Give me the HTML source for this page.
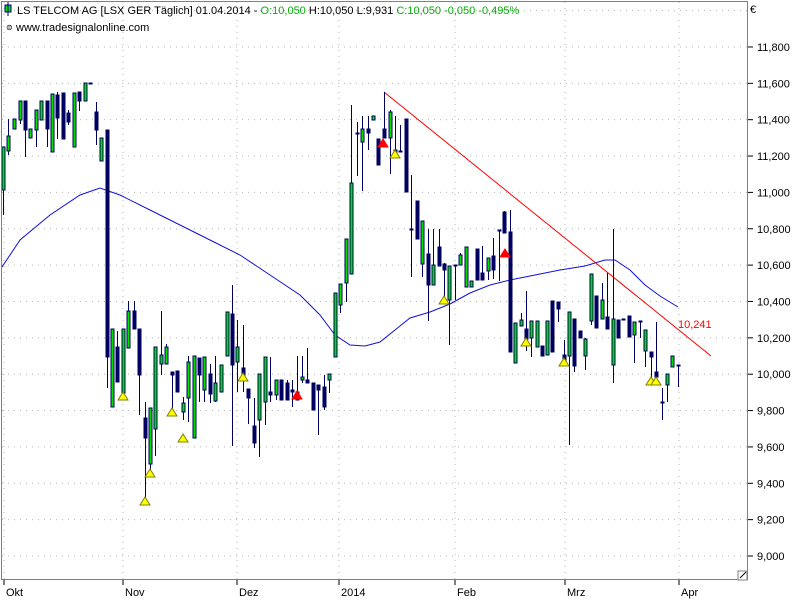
<!DOCTYPE html>
<html><head><meta charset="utf-8"><style>
body{margin:0;background:#fff;width:800px;height:600px;overflow:hidden;font-family:"Liberation Sans",sans-serif}
svg{position:absolute;left:0;top:0}
</style></head><body>
<svg id="s" width="800" height="600" xmlns="http://www.w3.org/2000/svg" font-family="Liberation Sans, sans-serif">
<rect x="0" y="0" width="800" height="600" fill="#fff"/>
<g id="grid" stroke="#b4b4b4" stroke-dasharray="1,5"></g>
<polyline fill="none" stroke="#1010e0" stroke-width="1" points="2,267 20,240 50,215 80,195 100,188 120,195 150,210 180,225 210,240 240,255 270,275 300,295 320,315 335,335 350,345 365,346 380,342 395,330 410,318 430,312 450,304 470,293 490,285 510,280 530,276 560,270 585,266 605,260 615,260 630,270 645,285 660,296 678,307"/>
<line x1="384" y1="92" x2="711" y2="356" stroke="#ff0000" stroke-width="1"/>
<g id="bars"></g>
<g id="tris"></g>
<text x="678" y="328" font-size="11" fill="#ff0000">10,241</text>
<rect x="1.5" y="1.5" width="746" height="578" fill="none" stroke="#808080"/>
<rect x="738" y="571" width="9" height="9" fill="#fff" stroke="#808080"/>
<line x1="740" y1="578" x2="746" y2="572" stroke="#000"/>
<g id="axis" font-size="11" fill="#000"></g>
<rect x="5" y="5" width="6" height="7" fill="#00e000" stroke="#000080"/>
<line x1="8" y1="2" x2="8" y2="16" stroke="#000080"/>
<text x="17" y="14" font-size="11"><tspan fill="#000">LS TELCOM AG [LSX GER  Täglich] 01.04.2014 - </tspan><tspan fill="#00b000">O:10,050 </tspan><tspan fill="#000">H:10,050 L:9,931 </tspan><tspan fill="#00b000">C:10,050 -0,050 -0,495%</tspan></text>
<text x="6" y="30" font-size="8">⊜</text>
<text x="16" y="31" font-size="11">www.tradesignalonline.com</text>
</svg>
<script>
var NS="http://www.w3.org/2000/svg";
function el(p,t,a){var e=document.createElementNS(NS,t);for(var k in a)e.setAttribute(k,a[k]);document.getElementById(p).appendChild(e);return e;}
// grid
for(var k=0;k<=14;k++){var y=556-k*36.36;el("grid","line",{x1:2,y1:y,x2:747,y2:y});
 var t=el("axis","text",{x:757,y:y+4});t.textContent=(9+k*0.2).toFixed(3).replace(".",",").replace(/^(\d+),(\d)(\d\d)$/,"$1,$2$3");
 var v=9000+k*200;t.textContent=Math.floor(v/1000)+","+String(v%1000).padStart(3,"0");
 el("axis","line",{x1:748,y1:y,x2:753,y2:y,stroke:"#000"});}
el("grid","line",{x1:2,y1:10.6,x2:747,y2:10.6});
var mx=[[4,"Okt"],[123,"Nov"],[237,"Dez"],[339,"2014"],[455,"Feb"],[565,"Mrz"],[679,"Apr"]];
mx.forEach(function(m){el("grid","line",{x1:m[0],y1:2,x2:m[0],y2:580});
 el("axis","line",{x1:m[0],y1:580,x2:m[0],y2:585,stroke:"#000"});
 var t=el("axis","text",{x:m[0]+2,y:596});t.textContent=m[1];});
var e=el("axis","text",{x:750,y:13});e.textContent="€";
// bars: x, bodyTop, bodyBottom, wickTop, wickBottom, up(1)/down(0)
var B=[[3,147,190,147,215,1],[8,136,151,119,155,1],[14,119,129,119,129,1],[20,101,120,101,124,1],[25,101,130,101,157,0],[30,129,138,129,138,1],[36,110,130,110,147,1],[41,101,120,101,120,1],[47,101,129,101,147,0],[52,94,152,94,152,1],[57,95,118,92,139,0],[63,93,139,93,139,0],[68,113,122,110,125,0],[74,93,147,93,147,1],[79,92,101,92,111,0],[85,83,101,83,101,1],[90,83,84,83,84,0],[96,112,130,102,145,0],[101,138,161,138,161,1],[107,130,357,130,388,0],
[112,329,407,329,407,1],[117,347,382,331,382,0],[123,329,393,329,393,1],[128,311,348,301,348,1],[134,311,329,301,329,0],[139,329,375,329,415,0],[145,418,438,402,505,0],[150,408,464,408,470,1],[155,347,429,347,456,1],[161,355,364,311,375,1],[166,347,364,344,364,1],[172,372,375,372,410,0],[177,371,392,371,392,0],[183,403,412,397,420,1],[188,362,398,356,422,1],[194,356,438,356,438,1],[199,358,375,358,402,0],[204,357,390,357,402,1],[210,374,394,364,403,0],[215,383,401,356,402,1],[221,365,392,365,392,1],[227,312,356,312,356,1],[232,314,365,285,446,0],[237,347,362,320,392,1],[243,368,375,325,392,0],[248,389,398,389,424,0],[254,426,443,398,448,0],[259,374,420,374,457,1],[265,357,402,357,425,1],[270,392,395,357,402,0],[276,380,395,380,400,1],[281,380,400,380,400,0],[287,383,400,380,400,0],[292,390,392,380,407,0],[297,392,400,356,400,0],[302,377,380,356,383,1],[307,380,383,348,383,0],[313,383,410,383,410,0],[318,385,390,385,435,0],[324,387,407,375,410,0],[329,374,380,374,393,1],
[335,293,357,293,357,1],[340,284,305,284,313,1],[346,239,283,239,302,1],[351,183,274,105,274,1],[357,133,134,122,176,0],[362,129,142,116,191,1],[368,129,133,116,150,0],[373,116,120,116,120,1],[378,139,165,139,165,0],[384,129,138,92,138,0],[390,112,138,110,174,1],[395,150,152,116,152,0],[400,151,152,125,152,0],[406,119,192,119,192,0],[411,229,230,175,277,0],[417,201,239,201,239,0],[422,221,264,221,277,1],[428,254,285,229,321,0],[433,265,285,229,285,1],[439,247,266,229,266,0],[444,264,270,263,300,0],[449,266,300,266,345,1],[455,265,266,265,300,0],[460,255,265,253,265,1],[466,247,287,247,287,1],[471,281,287,281,287,1],[477,249,280,249,280,0],[482,273,280,246,280,0],[488,258,271,258,280,1],[493,256,270,238,279,0],[499,230,231,230,281,0],[504,212,233,211,233,0],[510,232,352,210,352,0],[515,323,363,323,363,1],[521,320,326,313,326,1],[526,329,339,291,351,0],[531,321,338,321,357,1],[537,321,347,321,347,1],[542,346,356,346,356,0],[547,321,355,321,355,1],[552,301,352,301,352,0],[558,302,309,302,322,0],[564,355,361,340,361,0],[569,312,356,312,445,1],[574,319,366,319,372,0],[580,331,338,331,338,0],[585,339,356,338,370,1],[591,274,321,274,325,1],[596,296,328,296,328,0],[602,300,319,283,319,1],[607,317,329,273,329,0],[613,319,365,229,383,1],[618,320,338,320,338,0],[623,319,320,319,320,0],[629,316,337,316,337,0],[634,322,335,322,363,1],[640,321,322,321,338,0],[645,330,351,330,367,1],[651,352,357,352,380,0],[656,372,377,322,377,0],[662,402,403,388,420,0],[667,374,385,374,402,1],[672,356,367,356,367,1],[678,365,366,365,387,0]];
B.forEach(function(b){var x=b[0];
 el("bars","line",{x1:x+0.5,y1:b[3],x2:x+0.5,y2:b[4],stroke:"#000060"});
 el("bars","rect",{x:x-1,y:b[1],width:3,height:Math.max(1,b[2]-b[1]),fill:b[5]?"#00e000":"#000060",stroke:"#000060","stroke-width":1});});
var T=[[123,392,1],[145,497,1],[150,469,1],[172,408,1],[183,434,1],[243,373,1],[395,150,1],[444,296,1],[526,338,1],[564,358,1],[651,377,1],[656,377,1],[383,139,0],[297,391,0],[505,249,0]];
T.forEach(function(t){var x=t[0],y=t[1];
 el("tris","polygon",{points:(x)+","+y+" "+(x-5)+","+(y+8)+" "+(x+5)+","+(y+8),fill:t[2]?"#ffff00":"#ff0000",stroke:t[2]?"#808000":"#ff0000","stroke-width":1});});
</script>
</body></html>
